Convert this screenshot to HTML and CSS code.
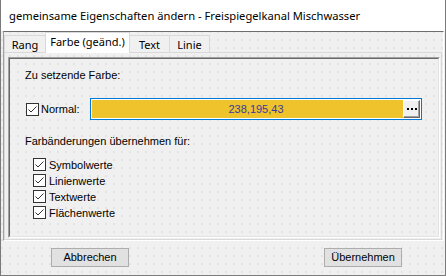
FILE: index.html
```html
<!DOCTYPE html>
<html lang="de">
<head>
    <meta charset="UTF-8">
    <title>gemeinsame Eigenschaften ändern</title>
    <link rel="stylesheet" href="styles.css">
</head>
<body>
    <div class="window">
        <div class="titlebar">gemeinsame Eigenschaften ändern - Freispiegelkanal Mischwasser</div>

        <div class="client grid">
            <div class="frame">
                <div class="tabs">
                    <div class="tab tab-rang">Rang</div>
                    <div class="tab tab-farbe active">Farbe (geänd.)</div>
                    <div class="tab tab-text">Text</div>
                    <div class="tab tab-linie">Linie</div>
                </div>
                <div class="panel">
                    <div class="group">
                        <div class="group-inner">
                            <div class="label first">Zu setzende Farbe:</div>

                            <div class="color-row">
                                <label class="check normal">
                                    <svg class="box" width="13" height="13" viewBox="0 0 13 13">
                                        <rect x="0.5" y="0.5" width="12" height="12" fill="#fff" stroke="#333"/>
                                        <polyline points="2.5,6.5 5,9 10.5,3.5" fill="none" stroke="#333" stroke-width="1"/>
                                    </svg>
                                    <span>Normal:</span>
                                </label>
                                <div class="color-field">
                                    <div class="color-fill">
                                        <span class="color-value">238,195,43</span>
                                        <div class="dots-btn">
                                            <i></i><i></i><i></i>
                                        </div>
                                    </div>
                                </div>
                            </div>

                            <div class="label second">Farbänderungen übernehmen für:</div>

                            <div class="check-list">
                                <label class="check item">
                                    <svg class="box" width="13" height="13" viewBox="0 0 13 13">
                                        <rect x="0.5" y="0.5" width="12" height="12" fill="#fff" stroke="#333"/>
                                        <polyline points="2.5,6.5 5,9 10.5,3.5" fill="none" stroke="#333"/>
                                    </svg>
                                    <span>Symbolwerte</span>
                                </label>
                                <label class="check item">
                                    <svg class="box" width="13" height="13" viewBox="0 0 13 13">
                                        <rect x="0.5" y="0.5" width="12" height="12" fill="#fff" stroke="#333"/>
                                        <polyline points="2.5,6.5 5,9 10.5,3.5" fill="none" stroke="#333"/>
                                    </svg>
                                    <span>Linienwerte</span>
                                </label>
                                <label class="check item">
                                    <svg class="box" width="13" height="13" viewBox="0 0 13 13">
                                        <rect x="0.5" y="0.5" width="12" height="12" fill="#fff" stroke="#333"/>
                                        <polyline points="2.5,6.5 5,9 10.5,3.5" fill="none" stroke="#333"/>
                                    </svg>
                                    <span>Textwerte</span>
                                </label>
                                <label class="check item">
                                    <svg class="box" width="13" height="13" viewBox="0 0 13 13">
                                        <rect x="0.5" y="0.5" width="12" height="12" fill="#fff" stroke="#333"/>
                                        <polyline points="2.5,6.5 5,9 10.5,3.5" fill="none" stroke="#333"/>
                                    </svg>
                                    <span>Flächenwerte</span>
                                </label>
                            </div>
                        </div>
                    </div>
                </div>
            </div>

            <div class="buttons">
                <button class="btn">Abbrechen</button>
                <button class="btn">Übernehmen</button>
            </div>
        </div>
    </div>
</body>
</html>
```

FILE: styles.css
```css
* {
    box-sizing: border-box;
}
html, body {
    margin: 0;
    padding: 0;
}
body {
    width: 446px;
    height: 276px;
    overflow: hidden;
    background: #f0f0f0;
    font-family: "Liberation Sans", Arial, sans-serif;
    font-size: 11px;
    color: #000;
}
.window {
    width: 446px;
    height: 276px;
    display: flex;
    flex-direction: column;
    border: 1px solid #7a7a7a;
    border-top: none;
}
.titlebar {
    height: 31px;
    flex: none;
    background: #fff;
    padding-left: 8px;
    line-height: 31px;
    font-family: "Noto Sans", sans-serif;
    font-size: 11.2px;
    white-space: nowrap;
}
.grid {
    background-color: #f0f0f0;
    background-image: radial-gradient(circle at 1px 1px, #dcdcdc 0.6px, transparent 0.9px);
    background-size: 8px 8px;
}
.client {
    flex: 1;
    display: flex;
    flex-direction: column;
}
.frame {
    height: 210px;
    margin: 0 1px 0 2px;
    display: flex;
    flex-direction: column;
    border-top: 1px solid #6d6d6d;
    border-left: 1px solid #a0a0a0;
    border-right: 1px solid #fff;
    border-bottom: 1px solid #fff;
}
.tabs {
    height: 20px;
    flex: none;
    display: flex;
    align-items: flex-end;
    font-family: "Noto Sans", sans-serif;
    font-size: 11px;
}
.tab {
    height: 17px;
    line-height: 17px;
    text-align: center;
    background: #f0f0f0;
    border: 1px solid #d9d9d9;
    border-bottom: none;
    margin-right: -1px;
}
.tab-rang { width: 42px; }
.tab-farbe { width: 85px; }
.tab-text { width: 41px; }
.tab-linie { width: 41px; }
.tab.active {
    height: 21px;
    line-height: 18px;
    margin-bottom: -1px;
    background: #fff;
    position: relative;
    z-index: 1;
}
.panel {
    flex: 1;
    margin-right: 1px;
    border: 1px solid #d9d9d9;
    padding: 4px 1px 1px 3px;
    display: flex;
}
.group {
    flex: 1;
    border-top: 1px solid #a0a0a0;
    border-left: 1px solid #a0a0a0;
    border-right: 1px solid #fff;
    border-bottom: 1px solid #fff;
}
.group-inner {
    height: 100%;
    border-top: 1px solid #696969;
    border-left: 1px solid #696969;
    border-right: 1px solid #e3e3e3;
    border-bottom: 1px solid #e3e3e3;
    padding-left: 15px;
}
.label {
    line-height: 14px;
    white-space: nowrap;
}
.label.first {
    margin-top: 9px;
}
.color-row {
    margin-top: 16px;
    height: 22px;
    display: flex;
    align-items: center;
}
.check {
    display: flex;
    align-items: center;
    white-space: nowrap;
}
.check .box {
    flex: none;
    display: block;
}
.check span {
    margin-left: 2px;
}
.normal {
    width: 64px;
    margin-left: 1px;
}
.color-field {
    width: 332px;
    height: 22px;
    border: 1px solid #0078d7;
    background: #fff;
    padding: 1px;
}
.color-fill {
    height: 100%;
    background: #eec32b;
    display: flex;
    align-items: center;
}
.color-value {
    flex: 1;
    text-align: center;
    padding-left: 17px;
    color: #3a3a9e;
}
.dots-btn {
    width: 17px;
    height: 18px;
    background: #f0f0f0;
    border-top: 1px solid #fff;
    border-left: 1px solid #fff;
    border-right: 1px solid #696969;
    border-bottom: 1px solid #696969;
    box-shadow: inset -1px -1px 0 #a0a0a0;
    display: flex;
    align-items: center;
    justify-content: center;
    gap: 2px;
    padding-bottom: 1px;
}
.dots-btn i {
    width: 2px;
    height: 2px;
    background: #000;
}
.label.second {
    margin-top: 14px;
}
.check-list {
    margin-top: 9px;
    margin-left: 8px;
}
.check.item {
    height: 16px;
    align-items: flex-start;
}
.check.item .box {
    margin-top: 1px;
}
.check.item span {
    margin-left: 3px;
    line-height: 16px;
}
.buttons {
    flex: 1;
    display: flex;
    justify-content: space-between;
    align-items: flex-start;
    padding: 7px 43px 0 50px;
}
.btn {
    width: 78px;
    height: 19px;
    padding: 0;
    background: #e1e1e1;
    border: 1px solid #adadad;
    font-family: "Liberation Sans", Arial, sans-serif;
    font-size: 11px;
    color: #000;
    line-height: 17px;
}
```
